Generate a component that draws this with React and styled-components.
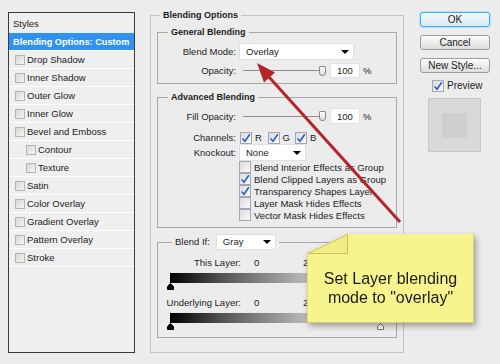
import styled, { createGlobalStyle } from 'styled-components'

const GlobalStyle = createGlobalStyle`
  body {
    margin: 0;
    background: #ececec;
    font-family: "Liberation Sans", Arial, sans-serif;
    font-size: 9.5px;
    color: #1c1c1c;
  }
`

const styleItems = [
  { label: 'Drop Shadow' },
  { label: 'Inner Shadow' },
  { label: 'Outer Glow' },
  { label: 'Inner Glow' },
  { label: 'Bevel and Emboss' },
  { label: 'Contour', nested: true },
  { label: 'Texture', nested: true },
  { label: 'Satin' },
  { label: 'Color Overlay' },
  { label: 'Gradient Overlay' },
  { label: 'Pattern Overlay' },
  { label: 'Stroke' },
]

const advancedOptions = [
  { label: 'Blend Interior Effects as Group', checked: false },
  { label: 'Blend Clipped Layers as Group', checked: true },
  { label: 'Transparency Shapes Layer', checked: true },
  { label: 'Layer Mask Hides Effects', checked: false },
  { label: 'Vector Mask Hides Effects', checked: false },
]

function Check({ checked }) {
  return (
    <CheckBox>
      {checked && (
        <svg width='10' height='10' viewBox='0 0 10 10'>
          <path d='M1.5 5.5 L4 8.2 L8.8 1.2' fill='none' stroke='#2a5cc0' strokeWidth='1.6' />
        </svg>
      )}
    </CheckBox>
  )
}

function Select({ value, width, height = 17 }) {
  return (
    <Dropdown $width={width} $height={height}>
      <span>{value}</span>
      <Caret />
    </Dropdown>
  )
}

function Thumb({ light }) {
  return (
    <svg width='7' height='7' viewBox='0 0 7 7'>
      <path
        d='M3.5 0.5 L6.5 3.5 L6.5 6.5 L0.5 6.5 L0.5 3.5 Z'
        fill={light ? '#fff' : '#000'}
        stroke={light ? '#777' : '#000'}
        strokeWidth='1'
      />
    </svg>
  )
}

function LayerRange({ label }) {
  return (
    <>
      <RangeRow>
        <RangeLabel>{label}</RangeLabel>
        <RangeValue>0</RangeValue>
        <span>255</span>
      </RangeRow>
      <GradientBar />
      <ThumbRow>
        <Thumb />
        <Thumb light />
      </ThumbRow>
    </>
  )
}

export default function App() {
  return (
    <>
      <GlobalStyle />
      <Page>
        <StylesPanel>
          <PanelHeader>Styles</PanelHeader>
          <StyleRow $selected>Blending Options: Custom</StyleRow>
          {styleItems.map((item) => (
            <StyleRow key={item.label} $nested={item.nested}>
              <ListBox />
              {item.label}
            </StyleRow>
          ))}
        </StylesPanel>

        <Main $outer>
          <Legend $offset={3}>Blending Options</Legend>

          <Main $top={5} $pad='5px 0 5px'>
            <Legend $offset={10}>General Blending</Legend>
            <Row $h={17}>
              <Label>Blend Mode:</Label>
              <Select value='Overlay' width={115} />
            </Row>
            <Row $h={15} $top={3}>
              <Label>Opacity:</Label>
              <Slider>
                <Track />
                <SliderThumb />
              </Slider>
              <NumberBox>100</NumberBox>
              <Percent>%</Percent>
            </Row>
          </Main>

          <Main $top={7} $pad='5px 0 6px'>
            <Legend $offset={10}>Advanced Blending</Legend>
            <Row $h={16}>
              <Label>Fill Opacity:</Label>
              <Slider>
                <Track />
                <SliderThumb />
              </Slider>
              <NumberBox>100</NumberBox>
              <Percent>%</Percent>
            </Row>
            <Row $h={13} $top={7}>
              <Label>Channels:</Label>
              <Channels>
                {['R', 'G', 'B'].map((c) => (
                  <ChannelItem key={c}>
                    <Check checked />
                    {c}
                  </ChannelItem>
                ))}
              </Channels>
            </Row>
            <Row $h={17}>
              <Label>Knockout:</Label>
              <Select value='None' width={67} />
            </Row>
            <OptionList>
              {advancedOptions.map((o) => (
                <OptionItem key={o.label}>
                  <Check checked={o.checked} />
                  {o.label}
                </OptionItem>
              ))}
            </OptionList>
          </Main>

          <Main $top={6} $pad='6px 0 7px'>
            <Legend $offset={14} $plain>
              <LegendInner>
                Blend If:
                <Select value='Gray' width={60} height={16} />
              </LegendInner>
            </Legend>
            <LayerRange label='This Layer:' />
            <Spacer />
            <LayerRange label='Underlying Layer:' />
          </Main>
        </Main>

        <Side>
          <Button $primary>OK</Button>
          <Button>Cancel</Button>
          <Button>New Style...</Button>
          <PreviewToggle>
            <Check checked />
            Preview
          </PreviewToggle>
          <Swatch>
            <SwatchInner />
          </Swatch>
        </Side>

        <Overlay width='500' height='364' viewBox='0 0 500 364'>
          <line x1='400' y1='222' x2='269' y2='77' stroke='#b3242b' strokeWidth='3' />
          <polygon points='257,63 275,72.5 264,82.5' fill='#b3242b' />
        </Overlay>

        <Note>
          <NoteBody>
            <NoteFold width='41' height='20' viewBox='0 0 41 20'>
              <polygon points='0.5,19.5 40.5,0.5 40.5,19.5' fill='#f1ec84' stroke='#c9c160' strokeWidth='1' />
            </NoteFold>
            <span>Set Layer blending</span>
            <span>mode to "overlay"</span>
          </NoteBody>
        </Note>
      </Page>
    </>
  )
}

const Page = styled.div`
  position: relative;
  display: flex;
  align-items: flex-start;
  width: 500px;
  height: 364px;
  padding: 9px 0 0 8px;
  box-sizing: border-box;
  overflow: hidden;
`

const StylesPanel = styled.div`
  display: flex;
  flex-direction: column;
  margin-top: 3px;
  width: 127px;
  height: 341px;
  border: 1px solid #3a3a3a;
  box-sizing: border-box;
  background: #efefef;
`

const PanelHeader = styled.div`
  display: flex;
  align-items: center;
  height: 20px;
  padding-left: 4px;
`

const StyleRow = styled.div`
  display: flex;
  align-items: center;
  gap: 2px;
  height: 18px;
  box-sizing: border-box;
  border-bottom: 1px solid #fff;
  padding-left: ${(p) => (p.$selected ? 4 : p.$nested ? 17 : 6)}px;
  background: ${(p) => (p.$selected ? '#3092f0' : 'transparent')};
  color: ${(p) => (p.$selected ? '#fff' : '#1c1c1c')};
  font-weight: ${(p) => (p.$selected ? 'bold' : 'normal')};
  font-size: ${(p) => (p.$selected ? '9.2px' : '9.5px')};
  white-space: nowrap;
`

const ListBox = styled.span`
  width: 8px;
  height: 8px;
  border: 1px solid #b4b4b4;
  background: linear-gradient(135deg, #d6d6d6, #f6f6f6);
`

const Main = styled.fieldset`
  margin: ${(p) => p.$top || 0}px 0 0;
  padding: ${(p) => (p.$outer ? '0 6px 14px' : p.$pad)};
  margin-left: ${(p) => (p.$outer ? 15 : 0)}px;
  width: ${(p) => (p.$outer ? '254px' : 'auto')};
  box-sizing: border-box;
  border: 1px solid ${(p) => (p.$outer ? '#c4c4c4' : '#a8a8a8')};
  min-width: 0;
`

const Legend = styled.legend`
  margin-left: ${(p) => p.$offset}px;
  padding: 0 3px;
  line-height: ${(p) => (p.$plain ? '16px' : '12px')};
  font-size: ${(p) => (p.$plain ? '9.5px' : '9px')};
  font-weight: ${(p) => (p.$plain ? 'normal' : 'bold')};
`

const LegendInner = styled.span`
  display: inline-flex;
  align-items: center;
  gap: 6px;
`

const Row = styled.div`
  display: flex;
  align-items: center;
  height: ${(p) => p.$h}px;
  margin-top: ${(p) => p.$top || 0}px;
`

const Label = styled.span`
  flex-shrink: 0;
  width: 78px;
  margin-right: 3px;
  text-align: right;
`

const Dropdown = styled.div`
  display: flex;
  align-items: center;
  justify-content: space-between;
  width: ${(p) => p.$width}px;
  height: ${(p) => p.$height}px;
  padding: 0 4px 0 6px;
  box-sizing: border-box;
  background: #fff;
  border: 1px solid #e0e0e0;
  font-size: 9.5px;
`

const Caret = styled.span`
  width: 0;
  height: 0;
  border-left: 4px solid transparent;
  border-right: 4px solid transparent;
  border-top: 4px solid #000;
`

const Slider = styled.div`
  display: flex;
  align-items: center;
  width: 83px;
  margin-left: 4px;
`

const Track = styled.div`
  flex: 1;
  height: 1px;
  background: #8c8c8c;
`

const SliderThumb = styled.div`
  width: 5px;
  height: 8px;
  border: 1px solid #8a8a8a;
  border-radius: 1px 1px 3px 3px;
  background: linear-gradient(#fdfdfd, #dcdcdc);
`

const NumberBox = styled.div`
  display: flex;
  align-items: center;
  width: 30px;
  height: 100%;
  margin-left: 4px;
  padding-left: 6px;
  box-sizing: border-box;
  background: #fff;
  border: 1px solid #e2e2e2;
`

const Percent = styled.span`
  margin-left: 3px;
`

const CheckBox = styled.span`
  display: inline-flex;
  align-items: center;
  justify-content: center;
  flex-shrink: 0;
  width: 12px;
  height: 12px;
  box-sizing: border-box;
  border: 1px solid #a3a9b4;
  background: linear-gradient(135deg, #d8dbe0, #fbfbfb);
`

const Channels = styled.div`
  display: flex;
`

const ChannelItem = styled.span`
  display: inline-flex;
  align-items: center;
  gap: 3px;
  width: 26.5px;
  margin-left: 1px;
`

const OptionList = styled.div`
  display: flex;
  flex-direction: column;
  margin-left: 81px;
`

const OptionItem = styled.div`
  display: flex;
  align-items: center;
  gap: 3px;
  height: 12px;
`

const RangeRow = styled.div`
  display: flex;
  align-items: center;
  height: 12px;
`

const RangeLabel = styled.span`
  width: 83px;
  text-align: right;
`

const RangeValue = styled.span`
  width: 49px;
  margin-left: 13px;
`

const GradientBar = styled.div`
  margin: 5px 0 0 12px;
  width: 211px;
  height: 10px;
  background: linear-gradient(to right, #000 0%, #555 25%, #c8c8c8 70%, #fff 100%);
`

const ThumbRow = styled.div`
  display: flex;
  justify-content: space-between;
  width: 217px;
  margin-left: 9px;
  height: 7px;
`

const Spacer = styled.div`
  height: 6px;
`

const Side = styled.div`
  display: flex;
  flex-direction: column;
  margin: 3px 0 0 16px;
  width: 70px;
`

const Button = styled.div`
  display: flex;
  align-items: center;
  justify-content: center;
  height: 15px;
  margin-bottom: 8px;
  box-sizing: border-box;
  border-radius: 3px;
  font-size: 10px;
  border: 1px solid ${(p) => (p.$primary ? '#45acef' : '#9c9c9c')};
  box-shadow: ${(p) => (p.$primary ? '0 0 0 1px #b8e2fa' : 'none')};
  background: ${(p) =>
    p.$primary
      ? 'linear-gradient(#f3f9fd, #d8ebf7)'
      : 'linear-gradient(#fbfbfb, #dddddd)'};
`

const PreviewToggle = styled.div`
  display: flex;
  align-items: center;
  gap: 3px;
  height: 13px;
  margin: -2px 0 0 12px;
  font-size: 10px;
`

const Swatch = styled.div`
  display: flex;
  margin: 6px 0 0 8px;
  width: 53px;
  height: 54px;
  box-sizing: border-box;
  border: 1px solid #c7c7c7;
  background: #d9d9d9;
`

const SwatchInner = styled.div`
  margin: 14px 0 0 13px;
  width: 25px;
  height: 25px;
  background: #cecece;
`

const Overlay = styled.svg`
  position: absolute;
  left: 0;
  top: 0;
  pointer-events: none;
`

const Note = styled.div`
  position: absolute;
  left: 307px;
  top: 234px;
  filter: drop-shadow(2px 3px 3px rgba(0, 0, 0, 0.35));
`

const NoteBody = styled.div`
  position: relative;
  display: flex;
  flex-direction: column;
  align-items: center;
  justify-content: center;
  width: 167px;
  height: 89px;
  padding-top: 18px;
  box-sizing: border-box;
  clip-path: polygon(40px 0, 100% 0, 100% 100%, 0 100%, 0 19px);
  background: #f8f48d;
  box-shadow: inset -1px -1px 0 #d4ce6a, inset 1px 0 0 #e2dc72;
  font-size: 16px;
  line-height: 19px;
  color: #1a1a1a;
`

const NoteFold = styled.svg`
  position: absolute;
  left: 0;
  top: 0;
`
